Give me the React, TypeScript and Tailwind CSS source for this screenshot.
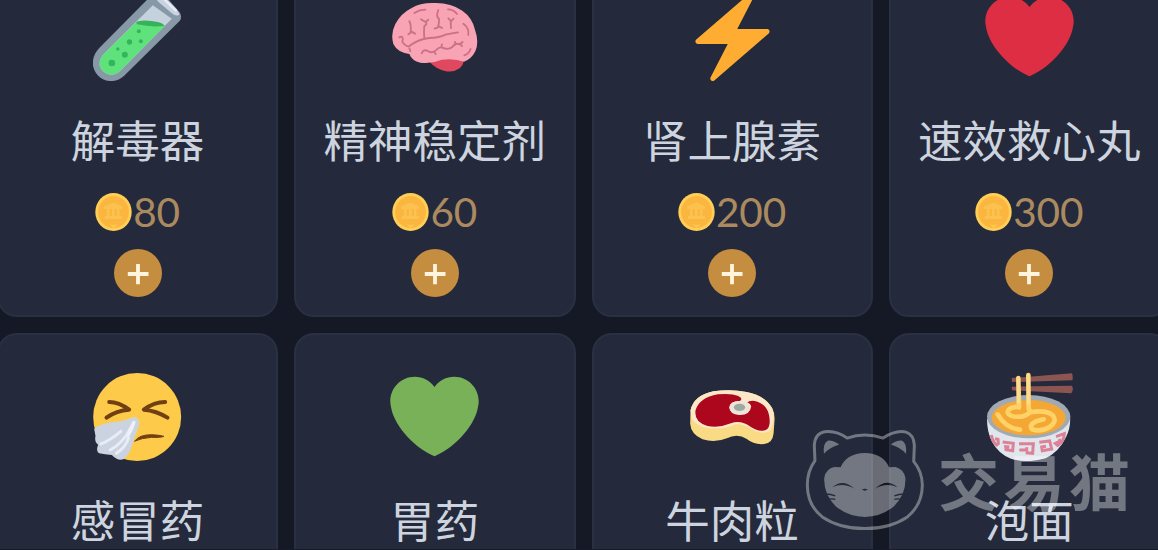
import type { ReactNode } from "react";

function Art({ box, children }: { box: string; children: ReactNode }) {
  return (
    <svg viewBox={box} className="size-[89px] shrink-0" fill="none" strokeLinecap="round" strokeLinejoin="round">
      {children}
    </svg>
  );
}

function TestTube() {
  return (
    <Art box="280.5 -24 267 267">
      <path d="M446-4 300 143C276 168 273 200 294 225C316 249 351 249 374 227L541 62C547 54 545 43 539 35L505-4C490-18 462-17 446-4Z" fill="#8798a7" />
      <path d="M460 16 315 160C297 178 295 199 311 214C325 228 347 227 362 213L517 56Z" fill="#c5d2dd" />
      <path d="M413 64 315 160C297 178 295 199 311 214C325 228 347 227 362 213L496 77Q456 61 413 64Z" fill="#5fe27c" />
      <path d="M410 67Q424 58 461 64Q492 68 495 78Q451 82 413 73Z" fill="#34b35b" />
      <path d="M472-5Q479-14 491-7L533 32Q543 41 538 45Q529 50 516 39L478 7Q469-1 472-5Z" fill="#c9d2de" />
      <path d="M493-4 529 31" stroke="#e8eef6" strokeWidth="8" />
      <g fill="#32b65c">
        <circle cx="337" cy="189" r="10" />
        <circle cx="376" cy="164" r="9" />
        <circle cx="390" cy="126" r="8" />
        <circle cx="424" cy="124" r="6" />
        <circle cx="355" cy="147" r="5" />
        <circle cx="418" cy="94" r="6" />
      </g>
    </Art>
  );
}

function Brain() {
  return (
    <Art box="303 -24 267 267">
      <path d="M420 184Q440 207 468 213Q492 219 512 205Q526 192 524 174L475 164Z" fill="#e0485f" />
      <path d="M368 24Q394 8 434 9Q484 7 520 32Q550 53 558 89Q571 126 559 154Q547 178 525 185Q496 174 458 179Q425 193 394 188Q369 183 361 162Q325 157 313 132Q304 101 319 72Q336 40 368 24Z" fill="#f8a4b5" />
      <path d="M331 112Q345 104 340 126Q351 140 360 139Q386 118 421 114Q451 113 472 103Q489 100 507 97M361 145 364 154M361 64Q367 72 365 98L358 103M366 94 378 101M396 58 409 66Q417 70 406 78Q404 94 406 114M409 66 418 59M448 30Q440 49 450 57Q451 68 447 82L437 86M450 79 459 84M478 55 485 62 486 84M486 64 494 56M376 39Q392 29 409 29M477 28Q493 28 504 42M523 71Q541 83 538 105M398 160Q404 146 416 153Q430 162 443 149Q451 140 460 143Q477 151 490 141Q500 127 512 133L521 126M435 155 440 162M457 141 459 133M499 134 498 126M514 133 519 138M526 166Q539 162 545 147" stroke="#cc7085" strokeWidth="5.5" />
    </Art>
  );
}

function Bolt() {
  return (
    <Art box="0 0 36 36">
      <path fill="#ffac33" d="M32.938 15.651C32.792 15.26 32.418 15 32 15H19.925L26.89 1.458c.219-.426.106-.947-.271-1.243C26.437.071 26.218 0 26 0c-.233 0-.466.082-.653.243L18 6.588 3.347 19.243c-.316.273-.43.714-.284 1.105S3.582 21 4 21h12.075L9.11 34.542c-.219.426-.106.947.271 1.243.182.144.401.215.619.215.233 0 .466-.082.653-.243L18 29.412l14.653-12.655c.317-.273.43-.714.285-1.106z" />
    </Art>
  );
}

function Heart({ color }: { color: string }) {
  return (
    <Art box="0 0 36 36">
      <path fill={color} d="M35.885 11.833c0-5.45-4.418-9.868-9.867-9.868-3.308 0-6.227 1.633-8.018 4.129-1.791-2.496-4.71-4.129-8.017-4.129-5.45 0-9.868 4.417-9.868 9.868 0 .772.098 1.52.266 2.241C1.751 22.587 11.216 31.568 18 34.034c6.783-2.466 16.249-11.447 17.617-19.959.17-.721.268-1.469.268-2.242z" />
    </Art>
  );
}

function Sneeze() {
  return (
    <Art box="100.5 37 267 267">
      <circle cx="233" cy="172" r="132" fill="#fdcb49" />
      <path d="M149 127Q178 127 209 150Q171 152 141 174M317 127Q284 127 253 150Q291 153 324 174" stroke="#704012" strokeWidth="12" />
      <path d="M226 244Q239 225 276 225Q300 226 313 230Q306 234 276 233Q247 235 226 244Z" fill="#704012" stroke="#704012" strokeWidth="3" />
      <path d="M104 207Q123 192 164 187Q194 184 217 174Q231 168 237 181Q243 193 235 207L218 254Q211 285 193 298Q176 306 157 286Q136 284 119 281Q108 273 116 255Q104 247 108 229Z" fill="#cbd3e1" />
      <path d="M124 253Q152 242 184 215M152 271Q190 251 213 206M171 281Q198 263 207 235" stroke="#e8edf5" strokeWidth="9" />
      <path d="M218 187Q227 178 228 188Q221 217 203 238Q200 220 218 187Z" fill="#edf1f8" />
    </Art>
  );
}

function Meat() {
  return (
    <Art box="114.4 36 267 267">
      <path d="M122 151Q132 106 191 94Q242 86 290 96Q347 107 367 145Q375 159 374 180L371 221Q368 249 343 252Q312 255 291 237Q262 219 231 235Q195 250 158 238Q123 222 121 191Z" fill="#fadb85" />
      <path d="M122 151Q132 106 191 94Q242 86 290 96Q347 107 367 145Q378 178 363 207Q349 225 318 214Q288 193 258 192Q217 210 175 204Q142 201 125 175Z" fill="#fce7c9" />
      <path d="M137 151Q148 113 204 103Q245 99 265 108Q281 115 270 123Q241 122 238 142Q240 164 268 165Q301 166 304 139Q301 129 292 128Q300 119 323 125Q351 136 357 163Q365 201 348 210Q327 217 303 201Q273 179 243 190Q207 205 173 198Q132 187 137 151Z" fill="#ad071d" />
      <ellipse cx="269" cy="143" rx="30" ry="20" fill="#ebe5dd" />
      <ellipse cx="269" cy="142" rx="17" ry="11" fill="#9cab9e" />
    </Art>
  );
}

function Noodles() {
  return (
    <Art box="76 66 267 267">
      <path d="M156 84 337 70Q341 81 338 91L157 96ZM156 110 337 107Q343 119 335 130L157 121Z" fill="#8c5552" />
      <path d="M82 207Q82 246 97 275Q116 311 154 326Q204 341 258 325Q298 306 319 262Q334 231 331 200Z" fill="#e1e5ec" />
      <ellipse cx="207" cy="200" rx="125" ry="65" fill="#9faab5" />
      <ellipse cx="207" cy="203" rx="111" ry="53" fill="#f5a735" />
      <path d="M114 193Q139 235 181 239M176 170Q139 174 145 190Q156 204 190 199Q218 190 207 176L206 75M178 172 176 84M210 187Q262 178 280 197Q293 215 270 231Q244 247 217 238Q207 225 229 214L252 208" stroke="#fdd267" strokeWidth="14" />
      <path d="M176 84V157M206 75V160" stroke="#fbdc94" strokeWidth="9" />
      <path d="M95 255Q99 276 111 285L116 281 115 268 106 266M129 276 161 280 159 302 139 299 138 290 149 291M178 281 221 281 219 310 198 308M179 300H201V292M239 277 270 273 276 297 248 302 246 291 259 289M289 260 314 251Q313 275 294 286L287 280 301 273 298 267" stroke="#db8298" strokeWidth="9" strokeLinecap="butt" strokeLinejoin="miter" />
    </Art>
  );
}

function Coin() {
  return (
    <svg viewBox="0 0 37 38" className="h-[38px] w-[37px] shrink-0" fill="none">
      <ellipse cx="18.5" cy="19" rx="18.2" ry="19" fill="#fece56" />
      <ellipse cx="18.5" cy="19" rx="15.4" ry="16" fill="#fbb640" />
      <path d="M9 13.5 18.5 9.5 27 13.5V16H9ZM10 23h17v3H10ZM12 16h2.5v7H12ZM17 16h2.5v7H17ZM22 16h2.5v7H22Z" fill="#fcc250" />
      <path d="M14.5 31Q18.5 33 23 31L18.5 35Z" fill="#fdc952" />
    </svg>
  );
}

type Item = { name: string; price: number; art: ReactNode };

const items: Item[] = [
  { name: "解毒器", price: 80, art: <TestTube /> },
  { name: "精神稳定剂", price: 60, art: <Brain /> },
  { name: "肾上腺素", price: 200, art: <Bolt /> },
  { name: "速效救心丸", price: 300, art: <Heart color="#de2e43" /> },
  { name: "感冒药", price: 50, art: <Sneeze /> },
  { name: "胃药", price: 50, art: <Heart color="#78b158" /> },
  { name: "牛肉粒", price: 40, art: <Meat /> },
  { name: "泡面", price: 20, art: <Noodles /> },
];

function Card({ name, price, art }: Item) {
  return (
    <article className="flex h-[364px] flex-col items-center rounded-[20px] border-2 border-[#293041] bg-[#242a3b] pt-[37px]">
      {art}
      <h2 className="mt-[28px] h-[60px] text-[44.5px] leading-[60px] font-normal whitespace-nowrap text-[#cdd4df]">{name}</h2>
      <div className="mt-[23px] flex h-10 items-center gap-px font-[Lato,sans-serif] text-[40.5px] leading-10 text-[#ab8a60]">
        <Coin />
        <span>{price}</span>
      </div>
      <button className="mt-[17px] flex size-12 shrink-0 items-center justify-center rounded-full bg-[#c58d3f]" aria-label={name}>
        <svg viewBox="0 0 48 48" className="size-12" stroke="#fff5df" strokeWidth="3.8">
          <path d="M13.8 25H34.5M24 15V35.2" />
        </svg>
      </button>
    </article>
  );
}

function Watermark() {
  return (
    <div className="absolute top-[427px] left-[803px] flex items-center opacity-[0.36]">
      <svg viewBox="40 50 370 315" className="h-[105px] w-[123px]" fill="none">
        <path d="M76 151 74 105Q76 69 105 64Q139 59 173 83Q225 64 281 83Q319 58 350 65Q373 72 375 105L373 153Q398 183 399 224Q399 283 354 320Q302 355 226 355Q150 355 98 320Q53 284 53 224Q53 183 76 151Z" stroke="white" strokeWidth="9" strokeLinejoin="round" />
        <path d="M103 130Q99 97 116 90Q131 89 149 102Q119 111 103 130ZM350 130Q353 97 337 90Q321 89 304 102Q334 111 350 130Z" fill="white" />
        <path fillRule="evenodd" d="M104 202Q109 175 134 170L153 171Q171 129 226 128Q281 129 299 171L318 170Q343 177 348 202Q351 251 314 288Q274 320 226 320Q178 320 138 288Q101 251 104 202ZM128 231Q160 203 195 235Q160 215 128 231ZM257 235Q293 202 324 231Q291 215 257 235ZM217 237Q226 233 235 237Q226 246 217 237Z" fill="white" />
        <path d="M108 251Q124 251 137 257M109 269Q124 264 137 267M344 251Q328 251 315 257M343 269Q328 264 315 267" stroke="#242a3b" strokeWidth="4" />
      </svg>
      <span className="ml-[12px] text-[61px] leading-[90px] font-bold tracking-[4.5px] whitespace-nowrap text-white">交易猫</span>
    </div>
  );
}

export default function App() {
  return (
    <main className="relative h-[550px] w-[1158px] overflow-hidden border-b border-[#171b29] bg-[#141925] font-['Noto_Sans_CJK_SC',sans-serif]">
      <div className="-mt-[47px] -ml-[3px] grid w-[1173px] grid-cols-4 gap-4">
        {items.map((item) => (
          <Card key={item.name} {...item} />
        ))}
      </div>
      <Watermark />
    </main>
  );
}
